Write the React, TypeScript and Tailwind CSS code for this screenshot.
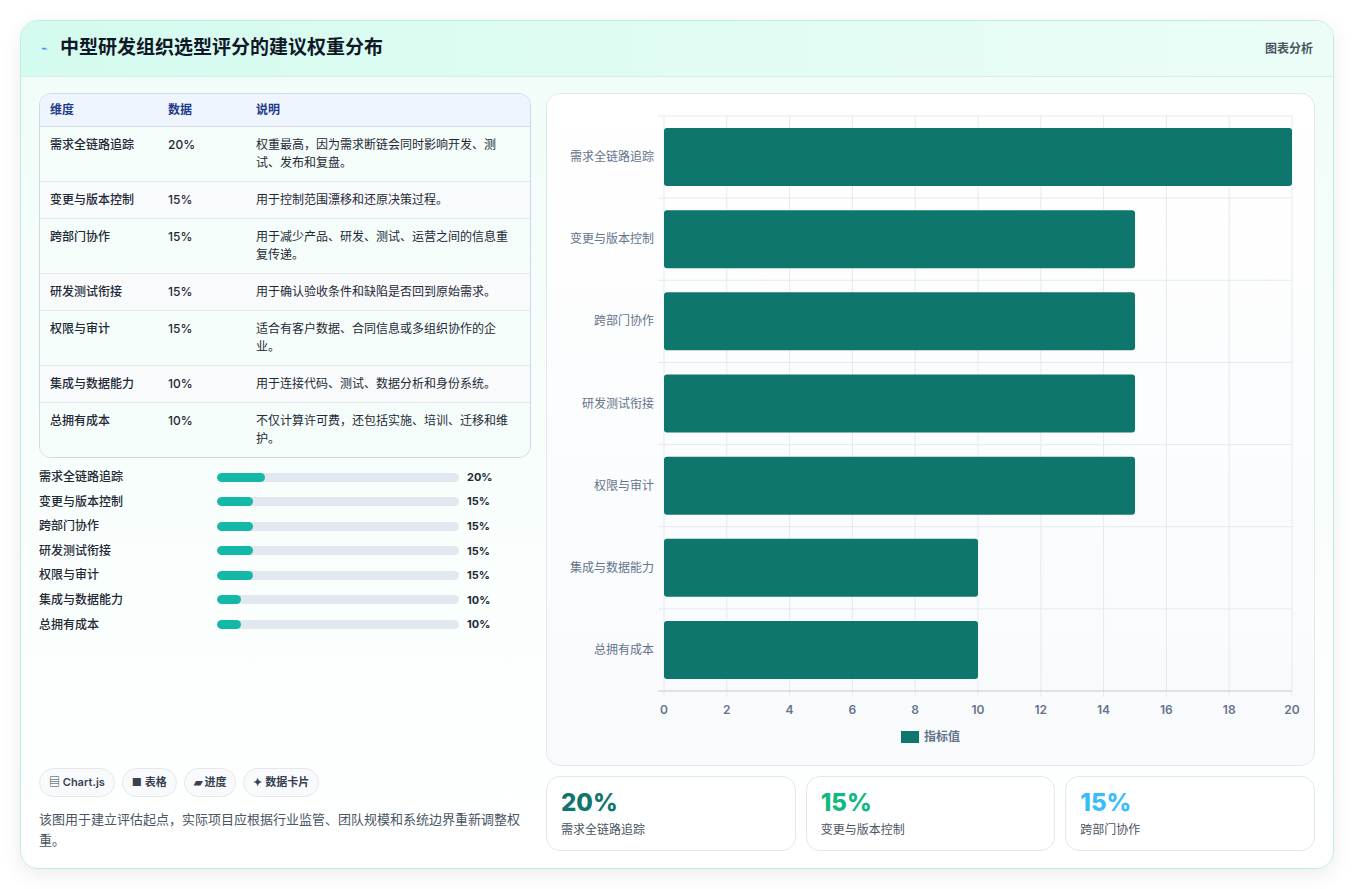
import React from "react";

const rows = [
  ["需求全链路追踪", "20%", "权重最高，因为需求断链会同时影响开发、测试、发布和复盘。", 20],
  ["变更与版本控制", "15%", "用于控制范围漂移和还原决策过程。", 15],
  ["跨部门协作", "15%", "用于减少产品、研发、测试、运营之间的信息重复传递。", 15],
  ["研发测试衔接", "15%", "用于确认验收条件和缺陷是否回到原始需求。", 15],
  ["权限与审计", "15%", "适合有客户数据、合同信息或多组织协作的企业。", 15],
  ["集成与数据能力", "10%", "用于连接代码、测试、数据分析和身份系统。", 10],
  ["总拥有成本", "10%", "不仅计算许可费，还包括实施、培训、迁移和维护。", 10],
] as const;

function Chart() {
  const W = 767, H = 670;
  const x0 = 117, x1 = 745, y0 = 22, y1 = 597;
  const band = (y1 - y0) / 7;
  const sx = (v: number) => x0 + ((x1 - x0) * v) / 20;
  return (
    <svg width={W} height={H} className="block">
      {Array.from({ length: 11 }).map((_, i) => (
        <line key={i} x1={sx(i * 2)} x2={sx(i * 2)} y1={y0} y2={y1 + 6} stroke="#e5e9f0" />
      ))}
      {Array.from({ length: 8 }).map((_, i) => (
        <line key={i} x1={x0 - 6} x2={x1} y1={y0 + i * band} y2={y0 + i * band} stroke="#e5e9f0" />
      ))}
      <line x1={x0 - 6} x2={x1} y1={y1} y2={y1} stroke="#cbd2dd" />
      {rows.map((r, i) => {
        const cy = y0 + i * band + band / 2;
        return (
          <g key={i}>
            <rect x={x0} y={cy - 29} width={sx(r[3]) - x0} height={58} rx={3} fill="#0f766e" />
            <text x={x0 - 10} y={cy + 4} textAnchor="end" fontSize={12} fill="#64748b">{r[0]}</text>
          </g>
        );
      })}
      {Array.from({ length: 11 }).map((_, i) => (
        <text key={i} x={sx(i * 2)} y={620} textAnchor="middle" fontSize={12} fontWeight={600} fill="#64748b">{i * 2}</text>
      ))}
      <rect x={354} y={637} width={18} height={12} fill="#0f766e" />
      <text x={377} y={647} fontSize={12} fontWeight={600} fill="#64748b">指标值</text>
    </svg>
  );
}

export default function App() {
  return (
    <div className="min-h-[889px] bg-white p-5" style={{ fontFamily: "Inter, 'Noto Sans CJK SC', sans-serif" }}>
      <div className="rounded-[18px] border border-[#bfeee0] bg-gradient-to-b from-[#f0fdf8] to-white shadow-[0_6px_20px_rgba(0,0,0,0.08)] overflow-hidden">
        <div className="h-[56px] flex items-center justify-between px-5 bg-gradient-to-r from-[#d4fbef] to-[#ecfdf7] border-b border-[#d6efe7]">
          <div className="flex items-center gap-3">
            <span className="text-[#3b82f6] text-[11px]">⌁</span>
            <span className="text-[19px] font-bold text-[#111827]">中型研发组织选型评分的建议权重分布</span>
          </div>
          <span className="text-[12px] font-semibold text-[#4b5563]">图表分析</span>
        </div>
        <div className="flex gap-[15px] px-[18px] pt-4 pb-[17px]">
          <div className="w-[492px] flex flex-col">
            <div className="rounded-[12px] border border-[#cdd9e8] overflow-hidden bg-white text-[12px]">
              <div className="flex h-[33px] items-center bg-[#eef5ff] text-[#1e3a8a] font-semibold border-b border-[#d3dce8]">
                <div className="w-[128px] pl-[10px]">维度</div>
                <div className="w-[88px]">数据</div>
                <div className="flex-1">说明</div>
              </div>
              {rows.map((r, i) => (
                <div key={i} className={`flex py-[9px] leading-[18px] text-[#1f2937] ${i % 2 ? "bg-[#f8fafc]" : "bg-[#f4fdf9]"} ${i < 6 ? "border-b border-[#e3e8ef]" : ""}`}>
                  <div className="w-[128px] pl-[10px] font-medium">{r[0]}</div>
                  <div className="w-[88px] font-medium">{r[1]}</div>
                  <div className="flex-1 pr-3">{r[2]}</div>
                </div>
              ))}
            </div>
            <div className="mt-[10px] flex flex-col gap-[6.6px]">
              {rows.map((r, i) => (
                <div key={i} className="flex items-center h-[18px] text-[12px] font-medium text-[#1f2937]">
                  <div className="w-[178px]">{r[0]}</div>
                  <div className="w-[242px] h-[9px] rounded-full bg-[#e2e8f0] overflow-hidden">
                    <div className="h-full rounded-full bg-[#14b8a6]" style={{ width: `${r[3]}%` }} />
                  </div>
                  <div className="ml-2 font-bold text-[11px]">{r[1]}</div>
                </div>
              ))}
            </div>
            <div className="flex-1" />
            <div className="flex gap-[7px] text-[11px] font-semibold text-[#374151]">
              {["▤ Chart.js", "■ 表格", "▰ 进度", "✦ 数据卡片"].map((t) => (
                <span key={t} className="px-[9px] h-[29px] flex items-center rounded-full border border-[#e5e7eb] bg-[#f8fafc]">{t}</span>
              ))}
            </div>
            <p className="mt-3 text-[13px] leading-[21px] text-[#4b5563] pr-2">该图用于建立评估起点，实际项目应根据行业监管、团队规模和系统边界重新调整权重。</p>
          </div>
          <div className="flex-1 flex flex-col gap-[10px]">
            <div className="h-[673px] rounded-[14px] border border-[#e2e8f0] bg-gradient-to-b from-white to-[#f8fafc] overflow-hidden">
              <Chart />
            </div>
            <div className="grid grid-cols-3 gap-[10px]">
              {[
                ["20%", "需求全链路追踪", "text-[#0f766e]"],
                ["15%", "变更与版本控制", "text-[#10b981]"],
                ["15%", "跨部门协作", "text-[#38bdf8]"],
              ].map(([v, l, c]) => (
                <div key={l} className="h-[75px] rounded-[14px] border border-[#e2e8f0] bg-white px-[14px] pt-[10px]">
                  <div className={`text-[24px] font-extrabold leading-[32px] ${c}`}>{v}</div>
                  <div className="text-[12px] text-[#4b5563] mt-[2px]">{l}</div>
                </div>
              ))}
            </div>
          </div>
        </div>
      </div>
    </div>
  );
}
